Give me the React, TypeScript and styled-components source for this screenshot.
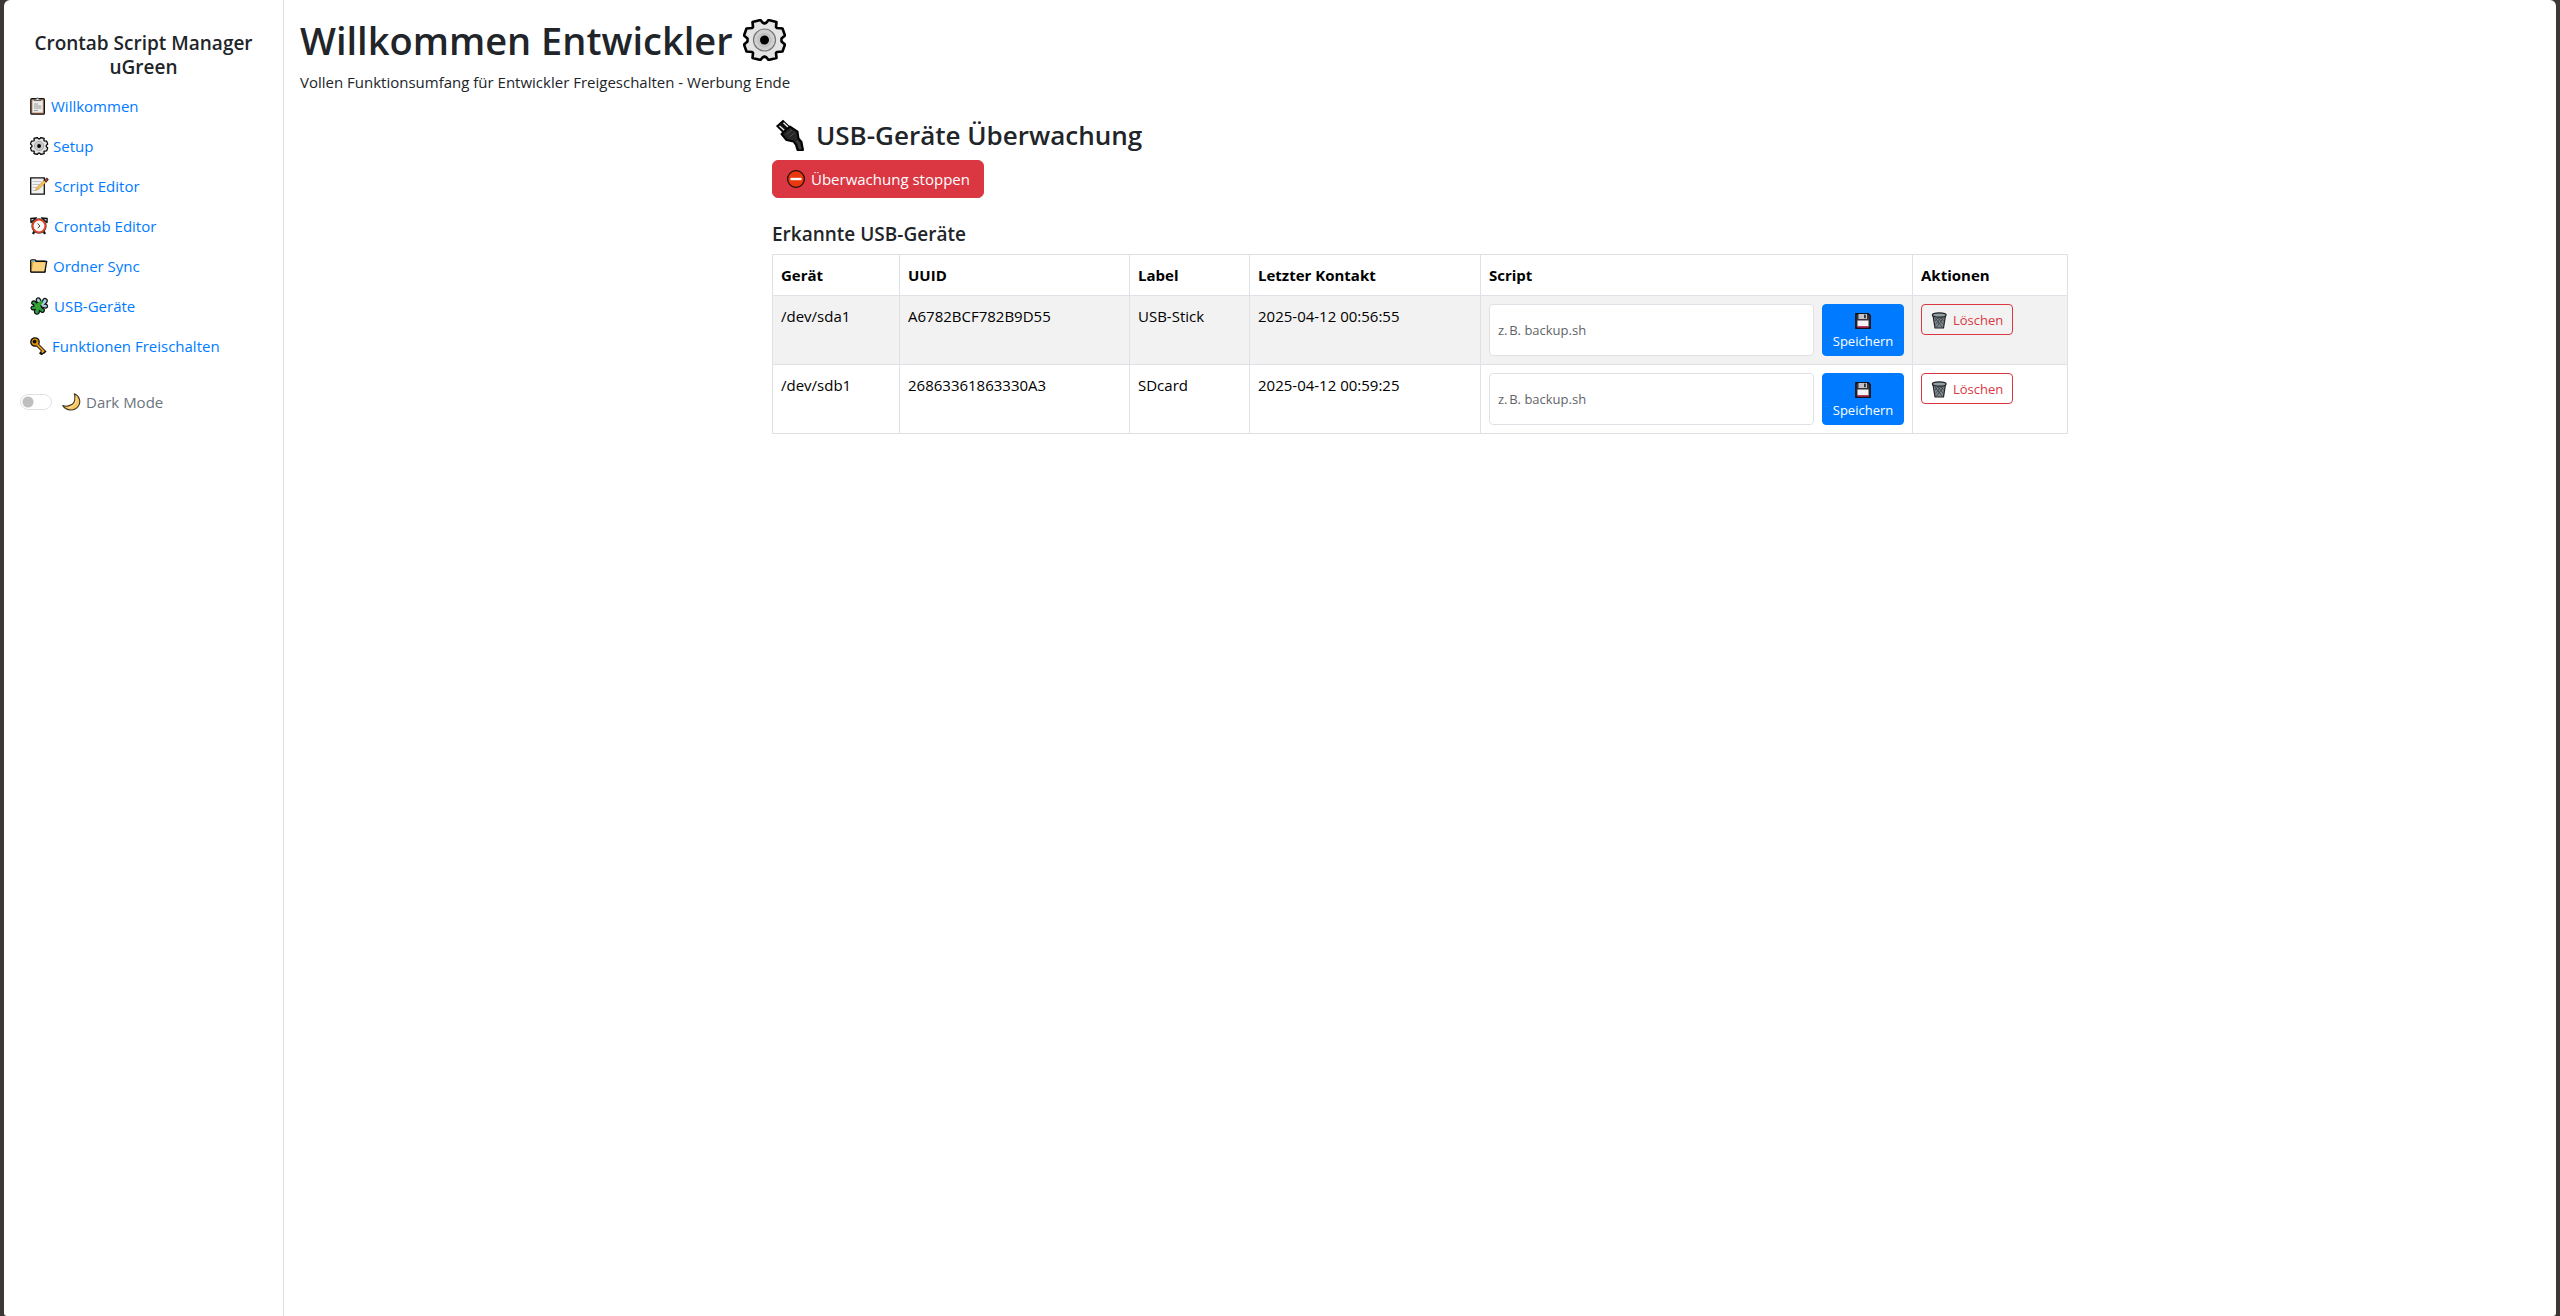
import React, { useState } from "react";
import styled, { createGlobalStyle } from "styled-components";

const GlobalStyle = createGlobalStyle`
  *, *::before, *::after { box-sizing: border-box; }
  html { background: #3b3835; }
  body {
    margin: 0;
    padding: 0 4px;
    font-family: "Open Sans", "Noto Sans", sans-serif;
    font-size: 15px;
    line-height: 24px;
    color: #212529;
  }
  h1, h2, h3, p { margin: 0; }
  button, input { font: inherit; margin: 0; }
`;

const Window = styled.div`
  display: flex;
  min-height: 100vh;
  background: #fff;
  border-radius: 6px 6px 3px 3px;
`;

const Sidebar = styled.aside`
  flex: 0 0 280px;
  padding: 31px 16px 16px;
  border-right: 1px solid #dee2e6;
`;

const SidebarTitle = styled.h2`
  font-size: 19px;
  line-height: 24px;
  font-weight: 600;
  text-align: center;
  margin-bottom: 7px;
`;

const NavLink = styled.a`
  display: flex;
  align-items: center;
  gap: 4px;
  padding: 8px 10px;
  color: #007bff;
  text-decoration: none;
`;

const ThemeRow = styled.label`
  display: flex;
  align-items: center;
  margin-top: 24px;
  color: #6c757d;
`;

const Switch = styled.input`
  appearance: none;
  width: 32px;
  height: 16px;
  margin-right: 10px;
  border: 1px solid #dee2e6;
  border-radius: 8px;
  background: #fff radial-gradient(circle at 7px 7px, #bfbfbf 5px, transparent 6px);
  &:checked {
    background: #007bff radial-gradient(circle at 23px 7px, #fff 5px, transparent 6px);
  }
`;

const ThemeText = styled.span`
  margin-left: 5px;
`;

const Main = styled.main`
  flex: 1;
  min-width: 0;
  padding: 16px;
`;

const PageTitle = styled.h1`
  display: flex;
  align-items: center;
  gap: 10px;
  font-size: 38px;
  line-height: 48px;
  font-weight: 600;
`;

const Lead = styled.p`
  margin: 6px 0 24px;
`;

const Container = styled.section`
  max-width: 1320px;
  margin: 0 auto;
  padding: 0 12px;
`;

const SectionTitle = styled.h2`
  display: flex;
  align-items: center;
  gap: 8px;
  font-size: 26px;
  line-height: 34px;
  font-weight: 600;
  margin-bottom: 8px;
`;

const TableTitle = styled.h3`
  font-size: 19px;
  line-height: 24px;
  font-weight: 600;
  margin: 24px 0 8px;
`;

const StopButton = styled.button`
  display: flex;
  align-items: center;
  gap: 5px;
  padding: 6px 13px;
  border: 1px solid #da3743;
  border-radius: 6px;
  background: #da3743;
  color: #fff;
`;

const DeviceTable = styled.table`
  width: 100%;
  table-layout: fixed;
  border-collapse: collapse;
  color: #000;
  th, td {
    padding: 8px;
    border: 1px solid #dee2e6;
    text-align: left;
    vertical-align: top;
  }
  th { font-weight: 700; }
  tbody tr:nth-child(odd) { background: #f2f2f2; }
`;

const Col = styled.col<{ $w?: number }>`
  width: ${(p) => (p.$w ? `${p.$w}px` : "auto")};
`;

const ScriptForm = styled.form`
  display: flex;
  gap: 8px;
`;

const ScriptInput = styled.input`
  flex: 1;
  min-width: 0;
  padding: 4px 8px;
  border: 1px solid #dee2e6;
  border-radius: 4px;
  background: #fff;
  font-size: 13px;
  line-height: 21px;
  color: #212529;
  &::placeholder { color: #5f6468; opacity: 1; }
`;

const SaveButton = styled.button`
  display: flex;
  flex-direction: column;
  align-items: center;
  width: 82px;
  padding: 5px 8px 3px;
  border: 1px solid #007bff;
  border-radius: 4px;
  background: #007bff;
  color: #fff;
  font-size: 13px;
  line-height: 21px;
`;

const IconLine = styled.span`
  display: flex;
  align-items: center;
  height: 21px;
`;

const DeleteButton = styled.button`
  display: flex;
  align-items: center;
  gap: 5px;
  width: 92px;
  padding: 5px 9px 3px;
  border: 1px solid #da3743;
  border-radius: 4px;
  background: transparent;
  color: #da3743;
  font-size: 13px;
  line-height: 21px;
`;

const Glyph = styled.svg`
  display: block;
  flex: none;
`;

const Clipboard = () => (
  <Glyph width="17" height="18" viewBox="0 0 17 18" aria-hidden="true">
    <rect x="0.8" y="1.600" width="13.6" height="15.6" rx="1" fill="#b9815a" stroke="#111" strokeWidth="1.2" />
    <rect x="2.400" y="3.400" width="10.400" height="12.200" fill="#ececec" />
    <path d="M4.400 3.600V2.200h1.900a1.3 1.3 0 0 1 2.600 0h1.900v1.400z" fill="#d2d2d2" stroke="#444" strokeWidth="0.8" />
    <path d="M4 7h4M4 9h7.200M4 11h7.200M4 13.500h4" stroke="#888" strokeWidth="0.8" />
  </Glyph>
);

const Gear = ({ size = 18, width = 19 }: { size?: number; width?: number }) => (
  <Glyph width={width} height={size} viewBox={size > 20 ? "0 0 43 42" : "0 0 45 42"} aria-hidden="true">
    <path
      d="M9.500 3L17.500 1L19.500 3.500L21.500 4.500L23.500 3.500L25.500 1L33.500 3L33 8L34 9L39.500 9.500L42 16.500L38.500 19.500L38.500 22.500L42 25.500L39.500 32.500L34 33L33 34L33.500 39L25.500 41L23.500 38.500L21.500 37.500L19.500 38.500L17.500 41L9.500 39L10 34L9 33L3.500 32.500L1 25.500L4.500 22.500L4.500 19.500L1 16.500L3.500 9.500L9 9L10 8Z"
      fill="#e4e4e4" stroke="#000" strokeWidth={size > 20 ? 2.600 : 3} strokeLinejoin="round"
    />
    <circle cx="21.500" cy="21" r="11" fill="#d0d0d0" stroke="#777" strokeWidth="1.200" />
    <circle cx="21.500" cy="21" r="7.500" fill="#c2c2c2" />
    <circle cx="21.500" cy="21" r="4.500" fill="#000" />
  </Glyph>
);

const Memo = () => (
  <Glyph width="20" height="18" viewBox="0 0 20 18" aria-hidden="true">
    <path d="M0.700 0.800H14.300V17.200H0.700Z" fill="#f2f2f2" stroke="#111" strokeWidth="1.300" />
    <path d="M2.500 4.500h9M2.500 7.500h7M2.500 10.500h4M2.500 13.500h3" stroke="#bbb" strokeWidth="0.900" />
    <path d="M5.500 13.500l1-2.800L14.500 3l1.900 1.900-8 7.600z" fill="#f6c251" stroke="#8a6420" strokeWidth="0.400" />
    <path d="M14.300 3.200l1.500-1.500a1.300 1.300 0 0 1 1.900 1.900L16.200 5z" fill="#b9453c" stroke="#111" strokeWidth="0.900" />
  </Glyph>
);

const Alarm = () => (
  <Glyph width="20" height="18" viewBox="0 0 20 18" aria-hidden="true">
    <path d="M1 5.500L0.800 1.500L6.500 0.800zM17 5.500L17.200 1.500L11.500 0.800z" fill="#c9c9c9" stroke="#111" strokeWidth="1.300" strokeLinejoin="round" />
    <path d="M4.500 14L3 17M13.500 14L15 17" stroke="#111" strokeWidth="2.200" />
    <circle cx="9" cy="9" r="6.600" fill="#fff" stroke="#444" strokeWidth="2.200" />
    <circle cx="9" cy="9" r="6.300" fill="#f7f7f7" stroke="#e2401f" strokeWidth="1.700" />
    <path d="M7.500 6.500L10 9L7.800 11" fill="none" stroke="#333" strokeWidth="0.900" />
  </Glyph>
);

const Folder = () => (
  <Glyph width="19" height="18" viewBox="0 0 19 18" aria-hidden="true">
    <path d="M0.700 14.800V3.600L2 2.800H5.200L6.400 4.200H15V14.800Z" fill="#e5a93c" stroke="#111" strokeWidth="1.300" strokeLinejoin="round" />
    <path d="M1.400 3.400H5V5H1.400z" fill="#72b7d8" />
    <path d="M1.500 14.800L3.500 5.200H16.400L14.700 14.800Z" fill="#fbd27c" />
    <path d="M5.500 4.300H16.700L14.800 15.100H0.900" fill="none" stroke="#111" strokeWidth="1.300" strokeLinejoin="round" />
  </Glyph>
);

const Puzzle = () => (
  <Glyph width="20" height="18" viewBox="0 0 20 18" aria-hidden="true">
    <path d="M7 5C4.500 1 9.500-1 10.500 3L12 4.800L13.500 2C15.500 0.500 18 2.500 17 4.800L15 7.200C18 7 18.500 11 15.500 11.200L11.500 10L8 7Z" fill="#a9cde0" stroke="#111" strokeWidth="1.300" />
    <path d="M2 5C3.500 3 5.800 4.200 6.500 6L9.500 5.800L11.200 9.500L12.600 11.400C15.500 11.800 14.500 16.200 11.500 15.200L9.500 13.600C9.500 16.500 8 17.600 6 17C3.500 16 4.500 14 5 12.600L2.500 12.800C0 11.500 1 8.800 3.800 9.200L3.600 7.600C1.900 7.200 1.300 6.200 2 5Z" fill="#2ea043" stroke="#111" strokeWidth="1.300" />
    <path d="M6 7L9 5L12 2.500L12.500 6L10 9L11 12L7 13L5 10Z" fill="#34a52f" />
  </Glyph>
);

const Key = () => (
  <Glyph width="18" height="18" viewBox="0 0 18 18" aria-hidden="true">
    <path d="M6.500 7L14 14.500M13.200 14L11.500 16" stroke="#111" strokeWidth="3.600" strokeLinecap="square" />
    <circle cx="5" cy="5" r="4.200" fill="#d98f0c" stroke="#111" strokeWidth="1.300" />
    <path d="M7 7.500L14.200 14.700M13 13.800L11.800 15.600" stroke="#e79b16" strokeWidth="1.900" />
    <circle cx="4.600" cy="4.600" r="1.900" fill="#111" />
  </Glyph>
);

const Moon = () => (
  <Glyph width="19" height="18" viewBox="0 0 19 18" aria-hidden="true">
    <path d="M12.300 0.700C17.500 2.500 19.300 9 16.300 13.300C12.500 18.500 4.500 18.200 0.800 12.600C6 14.500 12.500 11.500 12.800 6.200C13 4 12.900 2.500 12.300 0.700Z" fill="#f9c95f" stroke="#3a3020" strokeWidth="1.100" strokeLinejoin="round" />
    <path d="M14 4.500C15 9 12 14 6.500 14.800" fill="none" stroke="#fde0a0" strokeWidth="1" />
  </Glyph>
);

const Plug = () => (
  <Glyph width="36" height="32" viewBox="0 0 36 32" aria-hidden="true">
    <path d="M5 7L11 1.800L17.500 8L11.500 13.500Z" fill="#111" stroke="#000" strokeWidth="1.500" />
    <path d="M7.500 7L12.500 11.500M11.500 3.800L16.500 8.500" stroke="#e8e8e8" strokeWidth="1.500" />
    <path d="M9.500 15L18 7.500L25.500 12.500L26.500 19.500L29.500 23L31 31H25.500L24 26L21.500 22.500L14.500 21Z" fill="#262626" stroke="#000" strokeWidth="2" strokeLinejoin="round" />
    <path d="M14.500 15.500L20 11M17.500 18L22.500 14" stroke="#4d4d4d" strokeWidth="1" />
    <path d="M25 21.500C27 24 27.500 27 28.500 30.500" fill="none" stroke="#3c3c3c" strokeWidth="2" />
  </Glyph>
);

const NoEntry = () => (
  <Glyph width="20" height="20" viewBox="0 0 20 20" aria-hidden="true">
    <circle cx="10" cy="10" r="8.400" fill="#e9380d" stroke="#1a0d08" strokeWidth="1.200" />
    <path d="M4.500 10H15.500" stroke="#fff" strokeWidth="2.400" />
  </Glyph>
);

const Floppy = () => (
  <Glyph width="16" height="16" viewBox="0 0 16 16" aria-hidden="true">
    <path d="M0.800 0.800H13.500L15.200 2.500V15.200H0.800Z" fill="#39323c" stroke="#15131a" strokeWidth="1.400" />
    <rect x="3.500" y="1" width="8.500" height="5" fill="#bfc3c6" />
    <rect x="9" y="1.600" width="1.800" height="3.600" fill="#333" />
    <rect x="2.500" y="7.500" width="11" height="6" fill="#f3f3f3" />
    <path d="M2.500 14H13.500" stroke="#c2194b" strokeWidth="1.400" />
  </Glyph>
);

const Trash = () => (
  <Glyph width="17" height="17" viewBox="0 0 17 17" aria-hidden="true">
    <path d="M2 3.500L4 16H12.500L14.500 3.500Z" fill="#7e8a8f" stroke="#222" strokeWidth="1.200" strokeLinejoin="round" />
    <path d="M4 6L11 15M7 6L12.500 12.500M10 6L13 9.500M12.500 6L5.500 15M9.500 6L4.500 12.500M6.500 6L4 9.500" stroke="#353b3e" strokeWidth="0.800" />
    <ellipse cx="8.250" cy="3" rx="6.900" ry="2.200" fill="#8fa0a6" stroke="#222" strokeWidth="1.200" />
  </Glyph>
);

const navItems = [
  { label: "Willkommen", icon: <Clipboard /> },
  { label: "Setup", icon: <Gear /> },
  { label: "Script Editor", icon: <Memo /> },
  { label: "Crontab Editor", icon: <Alarm /> },
  { label: "Ordner Sync", icon: <Folder /> },
  { label: "USB-Geräte", icon: <Puzzle /> },
  { label: "Funktionen Freischalten", icon: <Key /> },
];

const devices = [
  { path: "/dev/sda1", uuid: "A6782BCF782B9D55", label: "USB-Stick", seen: "2025-04-12 00:56:55" },
  { path: "/dev/sdb1", uuid: "26863361863330A3", label: "SDcard", seen: "2025-04-12 00:59:25" },
];

export default function App() {
  const [dark, setDark] = useState(false);
  return (
    <>
      <GlobalStyle />
      <Window>
        <Sidebar>
          <SidebarTitle>
            Crontab Script Manager
            <br />
            uGreen
          </SidebarTitle>
          <nav>
            {navItems.map((item) => (
              <NavLink href="#" key={item.label}>
                {item.icon}
                {item.label}
              </NavLink>
            ))}
          </nav>
          <ThemeRow>
            <Switch type="checkbox" checked={dark} onChange={(e) => setDark(e.target.checked)} />
            <Moon />
            <ThemeText>Dark Mode</ThemeText>
          </ThemeRow>
        </Sidebar>
        <Main>
          <PageTitle>
            Willkommen Entwickler
            <Gear size={42} width={43} />
          </PageTitle>
          <Lead>Vollen Funktionsumfang für Entwickler Freigeschalten - Werbung Ende</Lead>
          <Container>
            <SectionTitle>
              <Plug />
              USB-Geräte Überwachung
            </SectionTitle>
            <StopButton type="button">
              <NoEntry />
              Überwachung stoppen
            </StopButton>
            <TableTitle>Erkannte USB-Geräte</TableTitle>
            <DeviceTable>
              <colgroup>
                <Col $w={127} />
                <Col $w={230} />
                <Col $w={120} />
                <Col $w={231} />
                <Col />
                <Col $w={155} />
              </colgroup>
              <thead>
                <tr>
                  <th>Gerät</th>
                  <th>UUID</th>
                  <th>Label</th>
                  <th>Letzter Kontakt</th>
                  <th>Script</th>
                  <th>Aktionen</th>
                </tr>
              </thead>
              <tbody>
                {devices.map((d) => (
                  <tr key={d.uuid}>
                    <td>{d.path}</td>
                    <td>{d.uuid}</td>
                    <td>{d.label}</td>
                    <td>{d.seen}</td>
                    <td>
                      <ScriptForm onSubmit={(e) => e.preventDefault()}>
                        <ScriptInput type="text" placeholder={"z.\u202fB. backup.sh"} aria-label={`Script ${d.path}`} />
                        <SaveButton type="submit">
                          <IconLine>
                            <Floppy />
                          </IconLine>
                          Speichern
                        </SaveButton>
                      </ScriptForm>
                    </td>
                    <td>
                      <DeleteButton type="button">
                        <Trash />
                        Löschen
                      </DeleteButton>
                    </td>
                  </tr>
                ))}
              </tbody>
            </DeviceTable>
          </Container>
        </Main>
      </Window>
    </>
  );
}
